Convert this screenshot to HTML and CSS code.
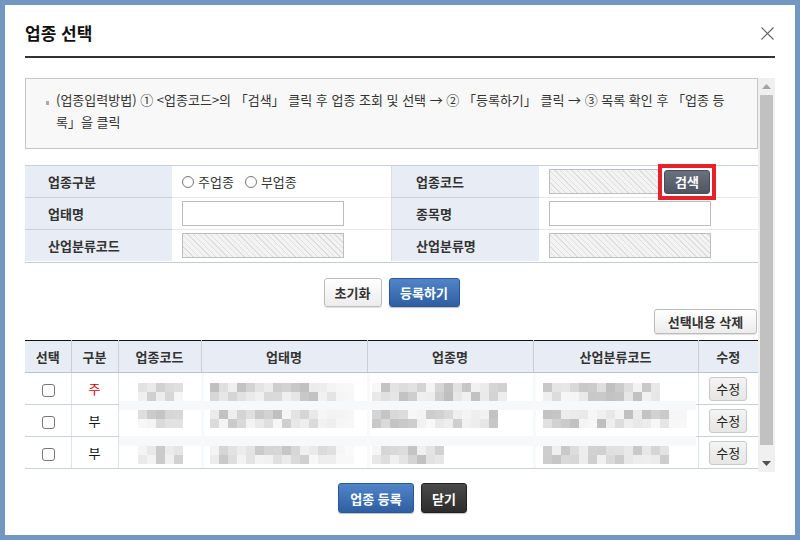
FILE: index.html
```html
<!DOCTYPE html>
<html lang="ko">
<head>
<meta charset="utf-8">
<title>업종 선택</title>
<link rel="stylesheet" href="styles.css">
</head>
<body>
<div class="modal">
  <div class="modal-head">
    <h1 class="title">업종 선택</h1>
    <button class="close" aria-label="닫기">
      <svg width="13" height="13" viewBox="0 0 13 13"><path d="M0.5 0.5 L12.5 12.5 M12.5 0.5 L0.5 12.5" stroke="#5a6070" stroke-width="1.1" fill="none"/></svg>
    </button>
  </div>
  <div class="modal-body">
    <div class="scroll-content">
      <div class="info">
        <p><span class="bullet"></span><span>(업종입력방법) ① &lt;업종코드&gt;의 「검색」 클릭 후 업종 조회 및 선택 → ② 「등록하기」 클릭 → ③ 목록 확인 후 「업종 등<br>록」을 클릭</span></p>
      </div>
      <div class="form-grid">
        <div class="lbl">업종구분</div>
        <div class="val">
          <label class="radio"><span class="circle"></span>주업종</label>
          <label class="radio"><span class="circle"></span>부업종</label>
        </div>
        <div class="lbl lbl2">업종코드</div>
        <div class="val"><span class="inp inp-dis inp-short"></span><span class="hl"><button class="btn btn-search">검색</button></span></div>
        <div class="lbl">업태명</div>
        <div class="val"><span class="inp"></span></div>
        <div class="lbl lbl2">종목명</div>
        <div class="val"><span class="inp"></span></div>
        <div class="lbl last">산업분류코드</div>
        <div class="val last"><span class="inp inp-dis"></span></div>
        <div class="lbl lbl2 last">산업분류명</div>
        <div class="val last"><span class="inp inp-dis"></span></div>
      </div>
      <div class="btn-row">
        <button class="btn btn-white btn-reset">초기화</button>
        <button class="btn btn-blue btn-reg">등록하기</button>
      </div>
      <div class="del-row">
        <button class="btn btn-white btn-del">선택내용 삭제</button>
      </div>
      <div class="list-wrap">
        <table class="list">
          <colgroup>
            <col class="c1"><col class="c2"><col class="c3"><col class="c4"><col class="c5"><col class="c6"><col class="c7">
          </colgroup>
          <thead>
            <tr><th>선택</th><th>구분</th><th>업종코드</th><th>업태명</th><th>업종명</th><th>산업분류코드</th><th class="th-last">수정</th></tr>
          </thead>
          <tbody>
            <tr><td><span class="chk"></span></td><td class="main">주</td><td></td><td></td><td></td><td></td><td class="td-last"><button class="btn btn-edit">수정</button></td></tr>
            <tr><td><span class="chk"></span></td><td>부</td><td></td><td></td><td></td><td></td><td class="td-last"><button class="btn btn-edit">수정</button></td></tr>
            <tr><td><span class="chk"></span></td><td>부</td><td></td><td></td><td></td><td></td><td class="td-last"><button class="btn btn-edit">수정</button></td></tr>
          </tbody>
        </table>
        <svg class="mosaic" id="mosaic" width="577" height="95" viewBox="0 0 577 95"></svg>
      </div>
    </div>
    <div class="scrollbar">
      <div class="sb-btn"><svg width="9" height="5" viewBox="0 0 9 5"><path d="M0 5 L4.5 0 L9 5 Z" fill="#a3a3a3"/></svg></div>
      <div class="sb-track"><div class="sb-thumb"></div></div>
      <div class="sb-btn"><svg width="9" height="5" viewBox="0 0 9 5"><path d="M0 0 L9 0 L4.5 5 Z" fill="#505050"/></svg></div>
    </div>
  </div>
  <div class="modal-foot">
    <button class="btn btn-blue btn-save">업종 등록</button>
    <button class="btn btn-dark btn-close">닫기</button>
  </div>
</div>
<script src="script.js"></script>
</body>
</html>
```

FILE: styles.css
```css
* { box-sizing: border-box; }
html, body { margin: 0; padding: 0; }
body {
  width: 800px;
  height: 540px;
  overflow: hidden;
  background: #7297c1;
  font-family: "Noto Sans CJK KR", "Noto Sans", sans-serif;
  color: #333;
}
.modal {
  margin: 5px;
  width: 790px;
  height: 530px;
  background: #fff;
  padding: 0 20px;
}
.modal-head {
  display: flex;
  justify-content: space-between;
  align-items: center;
  padding-top: 13px;
  padding-bottom: 8px;
  border-bottom: 2px solid #333;
}
.title {
  margin: 0;
  font-size: 17px;
  line-height: 30px;
  font-weight: bold;
  color: #111;
}
.close {
  border: 0;
  background: none;
  padding: 0;
  margin-right: 1px;
  width: 13px;
  height: 13px;
  display: flex;
}
.modal-body {
  display: flex;
  margin-top: 20px;
  height: 394px;
}
.scroll-content {
  width: 733px;
  height: 394px;
  overflow: hidden;
}
.info {
  height: 71px;
  border: 1px solid #c6c6c6;
  background: #f8f8f8;
  padding: 10px 20px 0 20px;
}
.info p {
  margin: 0;
  display: flex;
  gap: 7px;
  font-size: 13px;
  line-height: 22px;
  color: #333;
  white-space: nowrap;
}
.bullet {
  flex: none;
  width: 3px;
  height: 4px;
  margin-top: 12px;
  background: #aaa;
}
.form-grid {
  margin-top: 16px;
  display: grid;
  grid-template-columns: 147px 219px 148px 219px;
  grid-auto-rows: 32px;
  border-top: 1px solid #c8d0dc;
  border-bottom: 1px solid #c5ccd8;
}
.lbl {
  background: #e8edf5;
  border-bottom: 1px solid #c9d1dd;
  padding-left: 23px;
  font-size: 13px;
  font-weight: bold;
  color: #333;
  display: flex;
  align-items: center;
}
.lbl2 { padding-left: 24px; border-left: 1px solid #dcdcdc; }
.val {
  border-bottom: 1px solid #e8e8e8;
  padding-left: 10px;
  display: flex;
  align-items: center;
  font-size: 13px;
}
.form-grid .last { border-bottom: 0; height: 31px; }
.radio {
  display: flex;
  align-items: center;
  gap: 4px;
  margin-right: 11px;
  color: #333;
}
.circle {
  width: 12px;
  height: 12px;
  border: 1px solid #767676;
  border-radius: 50%;
  background: #fff;
}
.inp {
  display: block;
  width: 162px;
  height: 25px;
  border: 1px solid #bdbdbd;
  background: #fff;
}
.inp-dis {
  background: repeating-linear-gradient(45deg, #f3f3f3 0 3px, #dedede 3px 4px);
}
.inp-short { width: 113px; }
.btn {
  font-family: inherit;
  font-size: 13px;
  font-weight: bold;
  border-radius: 3px;
  padding: 0;
  cursor: pointer;
}
.hl {
  display: flex;
  margin-left: -4px;
  padding: 2px;
  border: 4px solid #e8202a;
}
.btn-search {
  width: 46px;
  height: 24px;
  color: #fff;
  background: linear-gradient(#6a707d, #4f5563);
  border: 1px solid #474c58;
}
.btn-row {
  margin-top: 15px;
  display: flex;
  justify-content: center;
  gap: 7px;
}
.btn-white {
  color: #333;
  background: linear-gradient(#ffffff, #ececec);
  border: 1px solid #bcbcbc;
  box-shadow: 0 1px 1px rgba(0,0,0,0.12);
}
.btn-blue {
  color: #fff;
  background: linear-gradient(#5284c8, #2f5fa3);
  border: 1px solid #2b5797;
  box-shadow: 0 1px 1px rgba(0,0,0,0.25);
}
.btn-dark {
  color: #fff;
  background: linear-gradient(#4a4a4a, #2c2c2c);
  border: 1px solid #222;
  box-shadow: 0 1px 1px rgba(0,0,0,0.25);
}
.btn-reset { width: 58px; height: 29px; }
.btn-reg { width: 71px; height: 29px; }
.del-row {
  margin-top: 2px;
  display: flex;
  justify-content: flex-end;
  padding-right: 1px;
}
.btn-del { width: 103px; height: 25px; }
.list-wrap {
  position: relative;
  margin-top: 6px;
}
.list {
  width: 733px;
  border-collapse: collapse;
  table-layout: fixed;
  border-top: 1px solid #111;
}
.c1 { width: 46px; }
.c2 { width: 47px; }
.c3 { width: 83px; }
.c4 { width: 166px; }
.c5 { width: 166px; }
.c6 { width: 165px; }
.c7 { width: 60px; }
.list th {
  height: 32px;
  padding: 0;
  background: #e8edf5;
  border-right: 1px solid #c8cfdb;
  border-bottom: 1px solid #b9c3d1;
  font-size: 13px;
  font-weight: bold;
  color: #333;
  text-align: center;
}
.list th.th-last { border-right: 0; }
.list td {
  height: 32px;
  padding: 0;
  border-right: 1px solid #dfe3ea;
  border-bottom: 1px solid #c8d1de;
  font-size: 13px;
  color: #111;
  text-align: center;
  vertical-align: middle;
}
.list td.td-last { border-right: 0; }
.list td.main { color: #d40000; }
.chk {
  display: inline-block;
  vertical-align: middle;
  width: 13px;
  height: 13px;
  margin-left: 2px;
  border: 1px solid #777;
  border-radius: 3px;
  background: #fff;
}
.btn-edit {
  width: 38px;
  height: 24px;
  font-weight: normal;
  color: #222;
  background: linear-gradient(#f4f4f4, #e6e6e6);
  border: 1px solid #c8c8c8;
  vertical-align: middle;
}
.mosaic {
  position: absolute;
  left: 94px;
  top: 33px;
  background: #fff;
}
.scrollbar {
  width: 17px;
  height: 394px;
  background: #f0f0f0;
  display: flex;
  flex-direction: column;
}
.sb-btn {
  height: 17px;
  display: flex;
  align-items: center;
  justify-content: center;
}
.sb-track {
  flex: 1;
  padding: 0 2px;
}
.sb-thumb {
  height: 350px;
  background: #c1c1c1;
}
.modal-foot {
  margin-top: 11px;
  display: flex;
  justify-content: center;
  gap: 7px;
  padding-left: 5px;
}
.btn-save { width: 76px; height: 30px; }
.btn-close { width: 46px; height: 30px; }
```

FILE: script.js
```js
(function () {
  var svg = document.getElementById('mosaic');
  var NS = 'http://www.w3.org/2000/svg';
  var seed = 11;
  function rnd() { seed = (seed * 9301 + 49297) % 233280; return seed / 233280; }
  function rect(x, y, w, h, fill) {
    var r = document.createElementNS(NS, 'rect');
    r.setAttribute('x', x); r.setAttribute('y', y);
    r.setAttribute('width', w); r.setAttribute('height', h);
    r.setAttribute('fill', fill);
    svg.appendChild(r);
  }
  function gray(v) { v = Math.round(v); return 'rgb(' + v + ',' + v + ',' + v + ')'; }
  rect(0, 28, 577, 9, '#f7f8fa');
  rect(0, 63, 577, 10, '#f7f8fa');
  [82, 248, 414].forEach(function (x) { rect(x, 0, 3, 95, '#f8f9fb'); });
  var rows = [10, 37, 73];
  var segs = [
    [[19, 5, 0], [91, 16, 2], [253, 15, 0], [424, 13, 0]],
    [[19, 5, 0], [91, 16, 2], [253, 14, 0], [424, 16, 2]],
    [[19, 5, 0], [91, 16, 2], [253, 8, 0], [424, 14, 0]]
  ];
  rows.forEach(function (top, ri) {
    segs[ri].forEach(function (s) {
      for (var i = 0; i < s[1]; i++) {
        var faint = i >= s[1] - s[2];
        for (var k = 0; k < 2; k++) {
          var v = faint ? 244 + rnd() * 6 : 190 + rnd() * 56;
          if (!faint && rnd() < 0.15) v = 238 + rnd() * 10;
          rect(s[0] + i * 9, top + k * 9, 9, 9, gray(v));
        }
      }
    });
  });
})();
```
